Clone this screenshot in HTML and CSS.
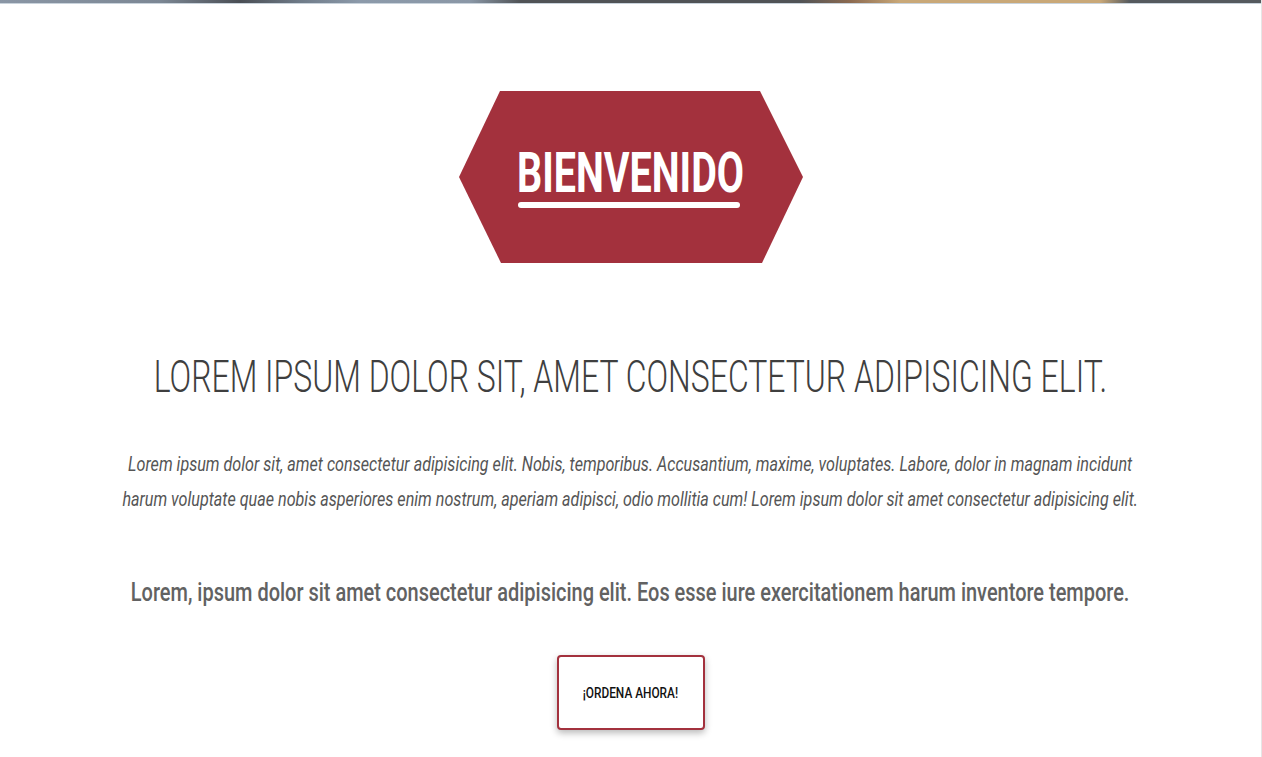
FILE: index.html
```html
<!DOCTYPE html>
<html lang="es">
<head>
<meta charset="utf-8">
<title>Bienvenido</title>
<link rel="stylesheet" href="styles.css">
</head>
<body>
<div class="strip"></div>
<main class="hero">
  <svg class="badge" width="344" height="172" viewBox="459 91 344 172" aria-label="Bienvenido">
    <polygon points="459,177 500,91 760,91 803,177 762,263 501,263" fill="#a3313d"/>
    <text x="517" y="192" textLength="227" lengthAdjust="spacingAndGlyphs" class="badge-text">BIENVENIDO</text>
    <rect x="518" y="202" width="222" height="6" rx="3" fill="#ffffff"/>
  </svg>
  <h1 class="title"><span class="squeeze squeeze-title">LOREM IPSUM DOLOR SIT, AMET CONSECTETUR ADIPISICING ELIT.</span></h1>
  <p class="intro"><span class="squeeze squeeze-intro">Lorem ipsum dolor sit, amet consectetur adipisicing elit. Nobis, temporibus. Accusantium, maxime, voluptates. Labore, dolor in magnam incidunt<br>harum voluptate quae nobis asperiores enim nostrum, aperiam adipisci, odio mollitia cum! Lorem ipsum dolor sit amet consectetur adipisicing elit.</span></p>
  <p class="lead"><span class="squeeze squeeze-lead">Lorem, ipsum dolor sit amet consectetur adipisicing elit. Eos esse iure exercitationem harum inventore tempore.</span></p>
  <a class="cta" href="#"><span class="squeeze squeeze-cta">¡ORDENA AHORA!</span></a>
</main>
</body>
</html>
```
FILE: styles.css
```css
html, body {
  margin: 0;
  padding: 0;
  background: #ffffff;
}
body {
  font-family: Roboto, "Liberation Sans", sans-serif;
  min-height: 757px;
  box-sizing: border-box;
  border-right: 1px solid #e6e6e6;
  overflow: hidden;
}
.strip {
  height: 3px;
  background: linear-gradient(90deg,
    #8a96a5 0px, #7c8794 160px, #4a4e54 240px, #6f7b88 300px,
    #8c9aaa 360px, #8a97a6 470px, #505356 520px, #505356 800px,
    #8c6a50 850px, #c9a878 900px, #c9a878 1100px, #555a5e 1130px, #555a5e 100%);
  border-bottom: 1px solid #c9d3dc;
}
.hero {
  display: flex;
  flex-direction: column;
  align-items: center;
  padding-top: 87px;
}
.badge {
  display: block;
}
.badge-text {
  font-family: Roboto, "Liberation Sans", sans-serif;
  font-weight: 700;
  font-size: 55px;
  fill: #ffffff;
}
.squeeze {
  display: inline-block;
  white-space: nowrap;
  flex-shrink: 0;
  transform-origin: 50% 50%;
}
.title, .intro, .lead {
  display: flex;
  justify-content: center;
  width: 100%;
  margin: 0;
  text-align: center;
}
.title {
  margin-top: 91px;
  font-size: 45px;
  line-height: 45px;
  font-weight: 300;
  color: #3f3f3f;
}
.squeeze-title {
  transform: scaleX(0.71);
}
.intro {
  margin-top: 48px;
  font-size: 21px;
  line-height: 35px;
  font-style: italic;
  color: #555555;
}
.squeeze-intro {
  transform: scaleX(0.768);
}
.lead {
  margin-top: 60px;
  font-size: 26px;
  line-height: 31px;
  font-weight: 500;
  color: #626262;
}
.squeeze-lead {
  transform: scaleX(0.768);
}
.cta {
  display: flex;
  align-items: center;
  justify-content: center;
  margin-top: 47px;
  width: 148px;
  height: 75px;
  box-sizing: border-box;
  border: 2px solid #a3313d;
  border-radius: 4px;
  box-shadow: 0 3px 7px rgba(0, 0, 0, 0.28);
  background: #ffffff;
  color: #111111;
  text-decoration: none;
  font-size: 15px;
  font-weight: 500;
}
.squeeze-cta {
  transform: scaleX(0.79);
}
```
